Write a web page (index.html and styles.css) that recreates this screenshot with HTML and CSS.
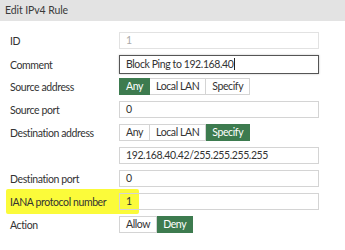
FILE: index.html
```html
<!DOCTYPE html>
<html lang="en">
<head>
    <meta charset="UTF-8">
    <title>Edit IPv4 Rule</title>
    <link rel="stylesheet" href="styles.css">
</head>
<body>
    <div class="panel">
        <div class="panel-title">Edit IPv4 Rule</div>

        <div class="form">
            <div class="row">
                <label>ID</label>
                <div class="field disabled">1</div>
            </div>
            <div class="row">
                <label>Comment</label>
                <div class="field focused">Block Ping to 192.168.40<span class="caret"></span></div>
            </div>
            <div class="row">
                <label>Source address</label>
                <div class="toggle">
                    <span class="opt active">Any</span>
                    <span class="opt">Local LAN</span>
                    <span class="opt">Specify</span>
                </div>
            </div>
            <div class="row">
                <label>Source port</label>
                <div class="field">0</div>
            </div>
            <div class="row">
                <label>Destination address</label>
                <div class="toggle">
                    <span class="opt">Any</span>
                    <span class="opt">Local LAN</span>
                    <span class="opt active">Specify</span>
                </div>
            </div>
            <div class="row">
                <label></label>
                <div class="field">192.168.40.42/255.255.255.255</div>
            </div>
            <div class="row">
                <label>Destination port</label>
                <div class="field">0</div>
            </div>
            <div class="row marked">
                <span class="highlight"></span>
                <label>IANA protocol number</label>
                <div class="field">1</div>
            </div>
            <div class="row">
                <label>Action</label>
                <div class="toggle">
                    <span class="opt">Allow</span>
                    <span class="opt active">Deny</span>
                </div>
            </div>
        </div>
    </div>
</body>
</html>
```

FILE: styles.css
```css
:root {
    --green: #3d7b4f;
    --border: #d4d4d4;
    --text: #333;
}

* {
    margin: 0;
    padding: 0;
    box-sizing: border-box;
    font-family: 'Lato', 'Liberation Sans', sans-serif;
}

body {
    background: #fff;
    color: var(--text);
    font-size: 10.5px;
    letter-spacing: -0.4px;
}

.panel-title {
    background: #e3e3e3;
    height: 21px;
    line-height: 21px;
    padding-left: 5px;
    color: #3a3a3a;
    letter-spacing: -0.1px;
}

.form {
    padding-top: 11px;
    display: flex;
    flex-direction: column;
    gap: 6px;
}

.row {
    display: grid;
    grid-template-columns: 119px 200px;
    align-items: center;
    height: 17px;
    position: relative;
}

.row label {
    padding-left: 10px;
    white-space: nowrap;
}

.field {
    height: 17px;
    line-height: 15px;
    border: 1px solid var(--border);
    padding-left: 6px;
    white-space: nowrap;
}

.field.disabled {
    color: #aaa;
    border-color: #e2e2e2;
}

.field.focused {
    height: 19px;
    line-height: 17px;
    border-color: #555;
    box-shadow: 0 0 2px rgba(0, 0, 0, 0.25);
}

.caret {
    display: inline-block;
    width: 1px;
    height: 12px;
    background: #222;
    vertical-align: -2px;
    margin-left: 1px;
}

.toggle {
    display: flex;
}

.opt {
    height: 17px;
    line-height: 15px;
    padding: 0 6px;
    border: 1px solid var(--border);
    border-left: none;
}

.opt:first-child {
    border-left: 1px solid var(--border);
}

.opt.active {
    background: var(--green);
    border-color: var(--green);
    color: #fff;
}

.highlight {
    position: absolute;
    left: 6px;
    top: -4px;
    width: 133px;
    height: 25px;
    background: #fbfb3a;
    border-radius: 2px;
}

.marked label,
.marked .field {
    position: relative;
}

.marked .field {
    background: transparent;
}
```
